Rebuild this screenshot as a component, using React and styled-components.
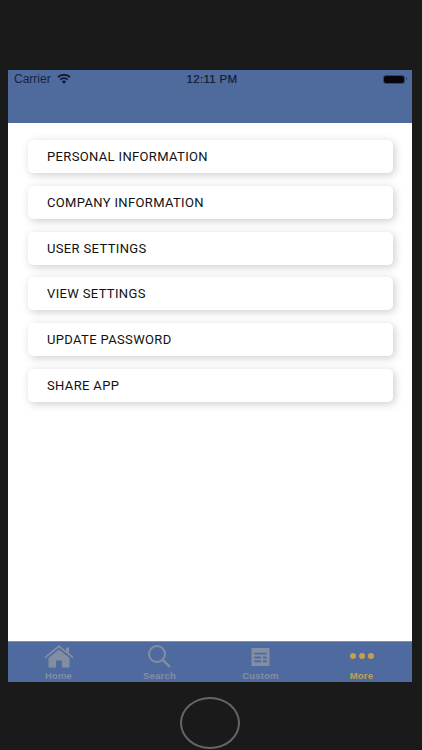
import React from "react";
import styled, { createGlobalStyle } from "styled-components";

const GlobalStyle = createGlobalStyle`
  html, body {
    margin: 0;
    padding: 0;
    background: #1a1a1a;
  }
`;

const Device = styled.div`
  width: 422px;
  height: 750px;
  overflow: hidden;
  background: #1a1a1a;
  display: flex;
  flex-direction: column;
  align-items: center;
  padding-top: 70px;
  box-sizing: border-box;
`;

const Screen = styled.div`
  width: 404px;
  height: 612px;
  margin-right: 2px;
  flex-shrink: 0;
  display: flex;
  flex-direction: column;
  background: #ffffff;
`;

const Header = styled.header`
  height: 53px;
  flex-shrink: 0;
  background: #4f6a9c;
  box-sizing: border-box;
`;

const StatusBar = styled.div`
  height: 18px;
  padding: 0 5px 0 6px;
  display: grid;
  grid-template-columns: 1fr auto 1fr;
  align-items: center;
  font-family: "Liberation Sans", Arial, sans-serif;
  font-size: 12px;
  color: #16233c;
`;

const Carrier = styled.div`
  display: flex;
  align-items: center;
  gap: 6px;
`;

const Time = styled.div`
  margin-left: 3px;
  font-size: 11.5px;
  letter-spacing: 0.3px;
  color: #0e1a30;
  -webkit-text-stroke: 0.2px #0e1a30;
`;

const Battery = styled.div`
  position: relative;
  justify-self: end;
  width: 22px;
  height: 9px;
  margin-right: 2px;
  background: #05070c;
  border: 1px solid #34466a;
  border-radius: 3px;
  box-sizing: border-box;

  &::after {
    content: "";
    position: absolute;
    right: -3px;
    top: 1px;
    width: 1px;
    height: 3px;
    background: #34466a;
  }
`;

const Menu = styled.main`
  flex: 1;
  display: flex;
  flex-direction: column;
  gap: 12.8px;
  padding: 17px 19px 0 20px;
`;

const MenuItem = styled.div`
  height: 33px;
  padding-left: 19px;
  display: flex;
  align-items: center;
  background: #ffffff;
  border-radius: 5px;
  box-shadow: 2px 2px 8px rgba(0, 0, 0, 0.2);
  font-family: Roboto, "Liberation Sans", Arial, sans-serif;
  font-size: 13px;
  letter-spacing: 0.35px;
  color: #111111;
`;

const TabBar = styled.nav`
  height: 41px;
  flex-shrink: 0;
  display: grid;
  grid-template-columns: repeat(4, 1fr);
  background: #4f6a9f;
  border-top: 1px solid #7c8fb0;
  box-sizing: border-box;
  overflow: hidden;
`;

const Tab = styled.div`
  display: flex;
  flex-direction: column;
  align-items: center;
  color: ${(p) => (p.$active ? "#c4a04e" : "#838ea3")};
  font-family: "Liberation Sans", Arial, sans-serif;
  font-size: 9.5px;
  font-weight: 700;
  letter-spacing: 0.2px;
`;

const IconSlot = styled.div`
  height: 28px;
  display: flex;
  align-items: center;
  justify-content: center;
`;

const HomeButton = styled.div`
  width: 60px;
  height: 52px;
  margin-top: 15px;
  margin-right: 3px;
  flex-shrink: 0;
  border: 2px solid #666666;
  border-radius: 50%;
  box-sizing: border-box;
`;

function WifiIcon() {
  return (
    <svg width="14" height="10" viewBox="0 0 14 10" fill="#101a2e">
      <path d="M7 10 4.9 7.5a3.2 3.2 0 0 1 4.2 0Z" />
      <path d="M3.9 6.3 2.7 4.9a6.5 6.5 0 0 1 8.6 0l-1.2 1.4a4.7 4.7 0 0 0-6.2 0Z" />
      <path d="M1.7 3.8.4 2.4a10 10 0 0 1 13.2 0l-1.3 1.4a8 8 0 0 0-10.6 0Z" />
    </svg>
  );
}

function HomeIcon() {
  return (
    <svg width="30" height="24" viewBox="0 0 30 24" fill="currentColor">
      <path d="M15 1 0.5 13l1 1.2L15 3.4l13.5 10.8 1-1.2-4.5-3.7V3.5h-3v3.4Z" />
      <path d="M15 5.5 4.5 14v9.5H12v-7h6v7h7.5V14Z" />
    </svg>
  );
}

function SearchIcon() {
  return (
    <svg width="24" height="24" viewBox="1 0 24 24" fill="none" stroke="currentColor">
      <circle cx="10" cy="10" r="8" strokeWidth="2" />
      <path d="M15.8 15.8 23 23" strokeWidth="2.4" />
    </svg>
  );
}

function CustomIcon() {
  return (
    <svg width="19" height="19" viewBox="0 0 19 20" fill="currentColor">
      <path
        fillRule="evenodd"
        d="M0 1h19v19H0ZM3 6v2h13V6Zm0 4v2h7v-2Zm9 0v2h4v-2Zm-9 4v2h7v-2Zm9 0v2h4v-2Z"
      />
    </svg>
  );
}

function MoreIcon() {
  return (
    <svg width="24" height="6" viewBox="0 0 24 6" fill="currentColor">
      <circle cx="3" cy="3" r="3" />
      <circle cx="12" cy="3" r="3" />
      <circle cx="21" cy="3" r="3" />
    </svg>
  );
}

const menuItems = [
  "PERSONAL INFORMATION",
  "COMPANY INFORMATION",
  "USER SETTINGS",
  "VIEW SETTINGS",
  "UPDATE PASSWORD",
  "SHARE APP",
];

const tabs = [
  { label: "Home", icon: <HomeIcon /> },
  { label: "Search", icon: <SearchIcon /> },
  { label: "Custom", icon: <CustomIcon /> },
  { label: "More", icon: <MoreIcon />, active: true },
];

export default function App() {
  return (
    <Device>
      <GlobalStyle />
      <Screen>
        <Header>
          <StatusBar>
            <Carrier>
              Carrier <WifiIcon />
            </Carrier>
            <Time>12:11 PM</Time>
            <Battery />
          </StatusBar>
        </Header>
        <Menu>
          {menuItems.map((item) => (
            <MenuItem key={item}>{item}</MenuItem>
          ))}
        </Menu>
        <TabBar>
          {tabs.map((tab) => (
            <Tab key={tab.label} $active={tab.active}>
              <IconSlot>{tab.icon}</IconSlot>
              {tab.label}
            </Tab>
          ))}
        </TabBar>
      </Screen>
      <HomeButton />
    </Device>
  );
}
